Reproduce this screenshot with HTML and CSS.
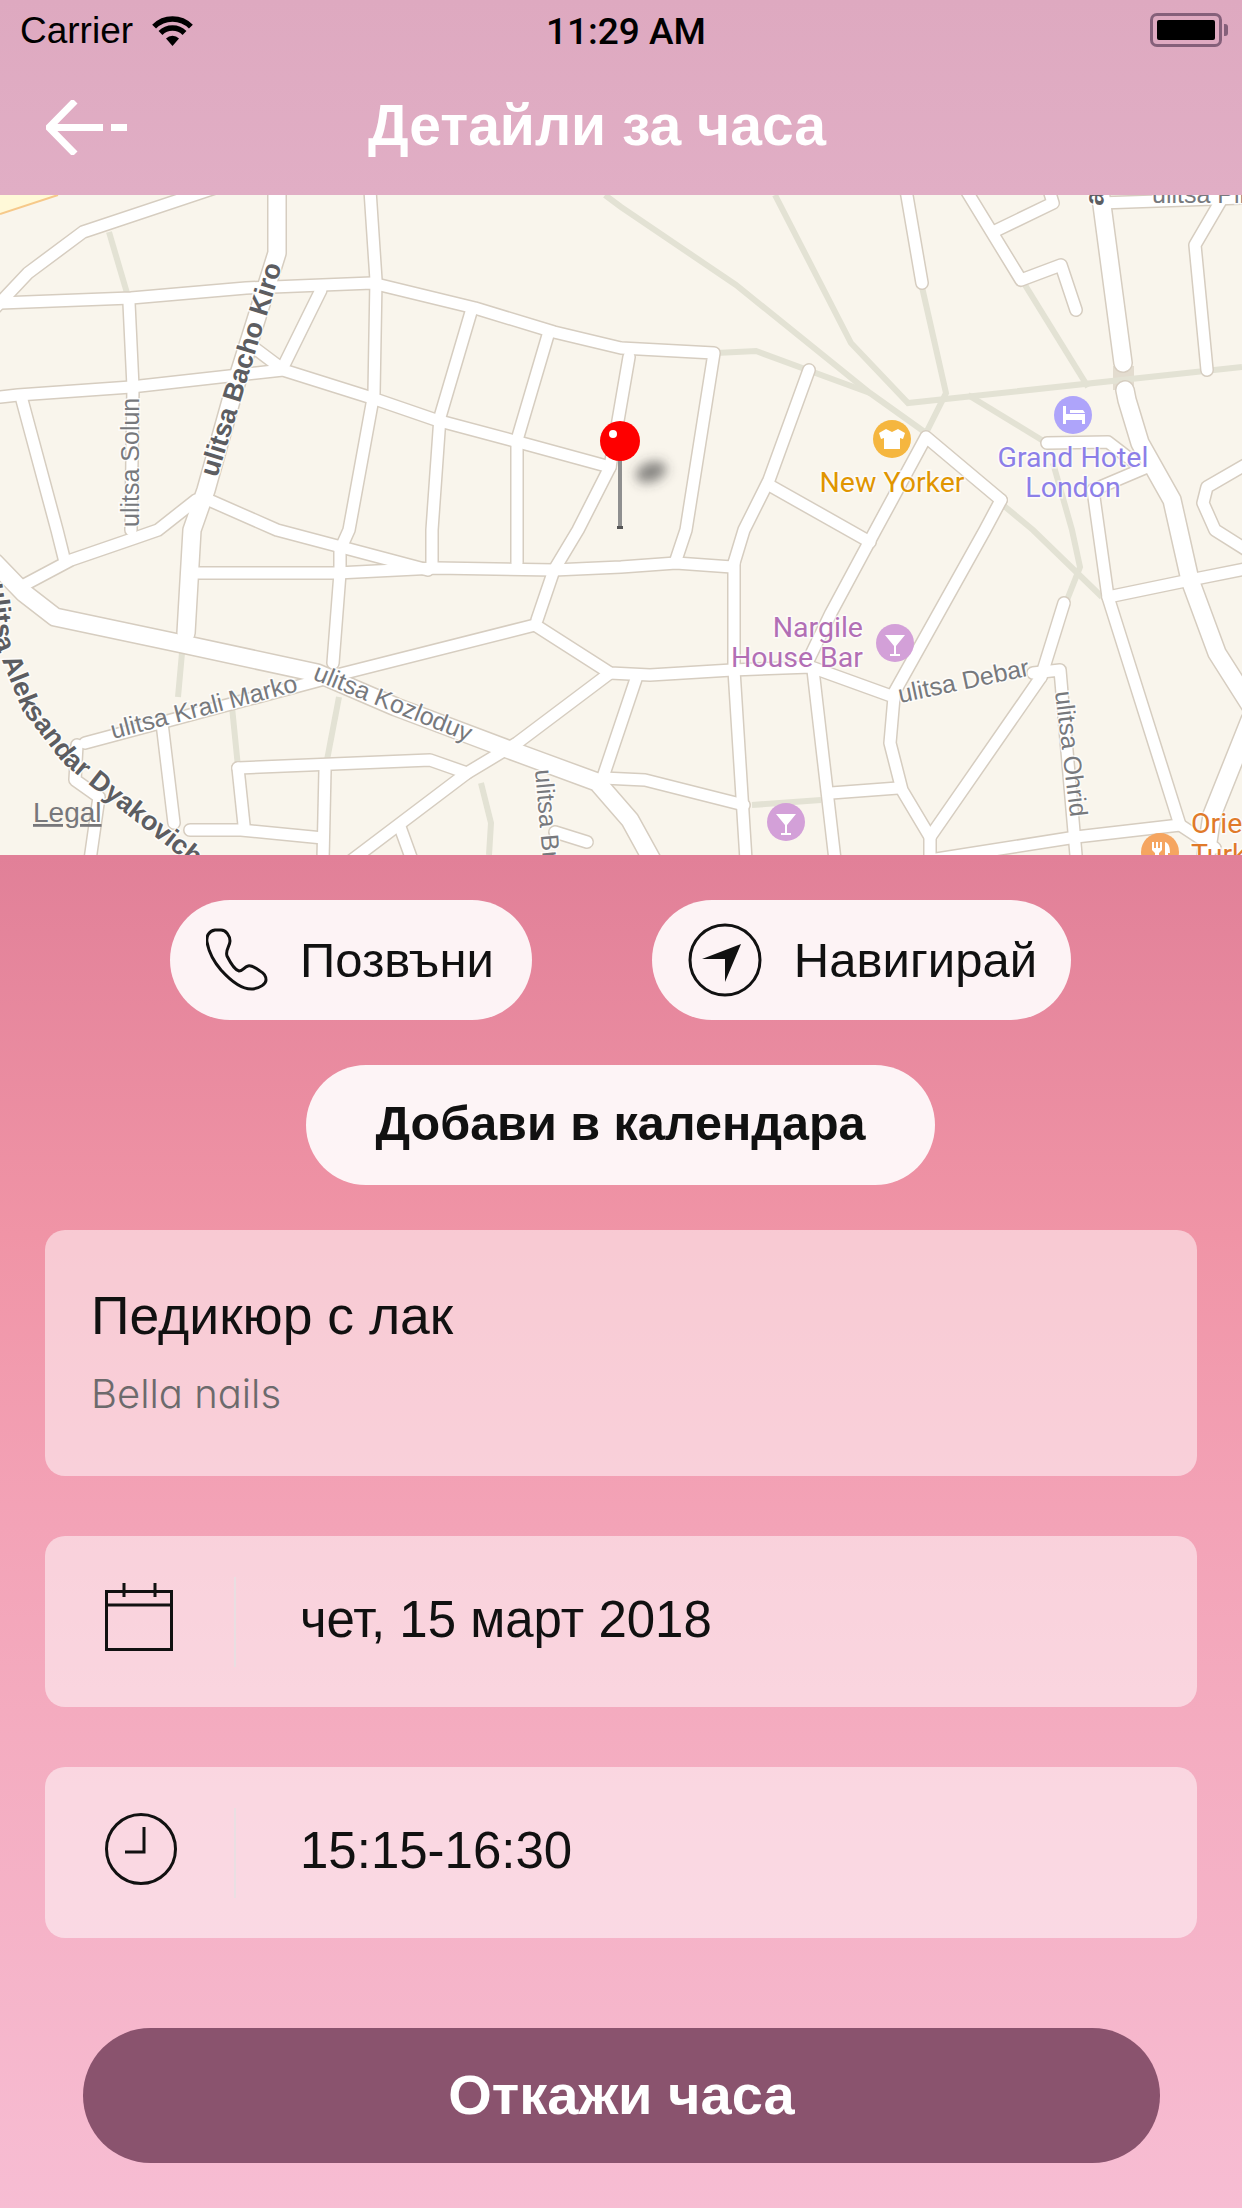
FILE: index.html
```html
<!DOCTYPE html>
<html>
<head>
    <meta charset="utf-8">
    <title>Детайли за часа</title>
    <link rel="stylesheet" href="styles.css">
</head>
<body>
    <header class="top">
        <div class="status">
            <div class="status-left">
                <span>Carrier</span>
                <svg class="wifi" width="43" height="30" viewBox="0 0 43 30">
                    <path class="wifi-arc" d="M3.1 10.6A26 26 0 0 1 39.9 10.6"/>
                    <path class="wifi-arc" d="M9.5 17A17 17 0 0 1 33.5 17"/>
                    <path d="M21.5 30L15 22.5A9.2 9.2 0 0 1 28 22.5Z"/>
                </svg>
            </div>
            <span class="clock">11:29 AM</span>
            <div class="battery"><div class="battery-level"></div></div>
        </div>
        <div class="nav">
            <svg class="back" width="81" height="55" viewBox="0 0 81 55">
                <path d="M29 1L3 27.500L29 54M3 27.500H57M65 27.500H81"/>
            </svg>
            <h1>Детайли за часа</h1>
        </div>
    </header>

    <!-- map is one picture, coordinates below are page coordinates -->
    <svg class="map" width="1242" height="660" viewBox="0 195 1242 660">
        <defs>
            <filter id="pinBlur" x="-80%" y="-80%" width="260%" height="260%">
                <feGaussianBlur stdDeviation="6"/>
            </filter>
            <path id="alekPath" d="M-12 584L-4 645L22 710L63 763L92 787L200 872"/>
            <g id="paths">
                <path d="M605 195L621 207L736 285L870 393L926 433"/>
                <path d="M775 195L851 343L908 403L1242 367"/>
                <path d="M922 287L946 393L926 433"/>
                <path d="M716 353L756 351L870 393"/>
                <path d="M968 395L1045 442"/>
                <path d="M1025 285L1088 387"/>
                <path d="M1053 463L1072 530L1080 567L1067 600"/>
                <path d="M997 500L1033 530L1102 597"/>
                <path d="M109 232L127 293"/>
                <path d="M182 653L178 697"/>
                <path d="M232 707L238 767"/>
                <path d="M339 697L327 760"/>
                <path d="M481 783L491 823L489 855"/>
                <path d="M752 805L821 800"/>
            </g>
            <g id="minor">
                <path d="M-5 308L28 273L83 232L215 188"/>
                <path d="M0 303L131 298L246 288L372 283L475 308L554 332L621 348L714 353L686 530L676 560"/>
                <path d="M370 190L376 280L374 393L349 530L340 550L340 573L333 663"/>
                <path d="M0 397L18 395L131 387L283 370L372 398L436 420L511 440L610 467"/>
                <path d="M629 357L610 467L578 530L554 570L537 620"/>
                <path d="M321 290L285 363"/>
                <path d="M253 347L277 365"/>
                <path d="M129 303L133 387L131 530"/>
                <path d="M196 500L158 530L135 538L71 560L24 585"/>
                <path d="M202 497L277 530L345 548L428 570"/>
                <path d="M198 573L337 573L436 568L554 570L621 567L676 563L732 567"/>
                <path d="M471 312L440 417L432 530L432 563"/>
                <path d="M548 335L517 440L517 563"/>
                <path d="M22 400L57 530L65 562"/>
                <path d="M77 745L75 780L99 797L90 860"/>
                <path d="M162 723L174 823"/>
                <path d="M85 743L321 680"/>
                <path d="M238 768L430 760L467 773"/>
                <path d="M238 768L244 825"/>
                <path d="M325 770L323 860"/>
                <path d="M190 830L241 830L323 838"/>
                <path d="M352 860L467 773L517 743L610 673"/>
                <path d="M535 625L329 677"/>
                <path d="M535 625L610 673L650 675L732 670L811 667L894 697L890 743L902 790L930 837L930 860"/>
                <path d="M400 827L412 860"/>
                <path d="M555 832L587 842"/>
                <path d="M603 777L637 676"/>
                <path d="M734 563L734 670L746 860"/>
                <path d="M813 670L835 860"/>
                <path d="M1001 500L926 437L874 533L831 613L807 663"/>
                <path d="M1001 500L985 530L894 693"/>
                <path d="M809 370L769 480L744 530L734 563"/>
                <path d="M769 485L870 542"/>
                <path d="M1041 677L1064 603"/>
                <path d="M1041 677L930 837"/>
                <path d="M1033 673L1060 670L1076 855"/>
                <path d="M930 860L1076 837L1180 825L1215 848"/>
                <path d="M1093 490L1108 597L1180 825"/>
                <path d="M1108 597L1190 580L1245 569"/>
                <path d="M831 793L898 788"/>
                <path d="M603 778L645 780L744 805"/>
                <path d="M906 190L922 283"/>
                <path d="M966 190L1021 280L1061 265L1076 310"/>
                <path d="M993 232L1053 203L1049 190"/>
                <path d="M1100 203L1245 198"/>
                <path d="M1223 197L1195 245L1207 370"/>
                <path d="M1047 443L1108 442L1134 462"/>
                <path d="M1152 465L1093 490"/>
                <path d="M1245 465L1207 487L1203 503L1215 530L1245 549"/>
            </g>
            <g id="major">
                <path d="M277 190L277 253L234 390L206 490L192 530L186 633"/>
                <path d="M-5 563L24 593L55 617L178 643L317 673L396 707L510 750L597 782L630 820L652 860"/>
                <path d="M1100 190L1123 363"/>
                <path d="M1125 390L1127 400L1140 443L1172 500L1190 580L1217 653L1250 705"/>
                <path d="M1205 862L1212 815L1250 720"/>
            </g>
        </defs>

        <rect class="map-ground" x="0" y="195" width="1242" height="660"/>
        <path class="map-park" d="M0 195H58L0 214Z"/>
        <path class="map-park-edge" d="M0 214L58 195"/>
        <rect class="map-tunnel" x="1113" y="366" width="21" height="24"/>
        <use href="#paths" class="path-line"/>
        <use href="#minor" class="road-case"/>
        <use href="#major" class="road-case-wide"/>
        <use href="#minor" class="road-fill"/>
        <use href="#major" class="road-fill-wide"/>

        <text class="street" transform="translate(139 527) rotate(-90)">ulitsa Solun</text>
        <text class="street street-bold" transform="translate(217 478) rotate(-73)">ulitsa Bacho Kiro</text>
        <text class="street street-bold"><textPath href="#alekPath">ulitsa Aleksandar Dyakovich</textPath></text>
        <text class="street" transform="translate(113 739) rotate(-14.500)">ulitsa Krali Marko</text>
        <text class="street" transform="translate(312 679) rotate(22)">ulitsa Kozloduy</text>
        <text class="street" transform="translate(535 770) rotate(85)">ulitsa Bratstvo</text>
        <text class="street" transform="translate(900 703) rotate(-12)">ulitsa Debar</text>
        <text class="street" transform="translate(1055 692) rotate(83)">ulitsa Ohrid</text>
        <text class="street" x="1152" y="203">ulitsa Pirot</text>
        <text class="street street-bold" transform="translate(1103 206) rotate(-85)">a</text>
        <text class="legal" x="33" y="822">Legal</text>

        <circle class="poi-shop" cx="892" cy="439" r="19"/>
        <path class="poi-glyph" d="M886 429L892 432L898 429L905 433L903 439L900 438V449H884V438L881 439L879 433Z"/>
        <text class="poi-name poi-name-shop" x="892" y="492">New Yorker</text>

        <circle class="poi-hotel" cx="1073" cy="415" r="19"/>
        <path class="poi-glyph" d="M1063 406H1066V414H1085V424H1082V420H1066V424H1063ZM1070 410H1083L1085 413H1070Z"/>
        <text class="poi-name poi-name-hotel" x="1073" y="467">Grand Hotel</text>
        <text class="poi-name poi-name-hotel" x="1073" y="497">London</text>

        <circle class="poi-bar" cx="895" cy="643" r="19"/>
        <path class="poi-glyph" d="M885 635H905L896 646V654H900V656H890V654H894V646Z"/>
        <text class="poi-name poi-name-bar poi-end" x="863" y="637">Nargile</text>
        <text class="poi-name poi-name-bar poi-end" x="863" y="667">House Bar</text>

        <circle class="poi-bar" cx="786" cy="822" r="19"/>
        <path class="poi-glyph" d="M776 814H796L787 825V833H791V835H781V833H785V825Z"/>

        <circle class="poi-food" cx="1160" cy="852" r="19"/>
        <path class="poi-glyph" d="M1152 842H1154V848H1156V842H1158V848H1160V842H1162V850L1159 853V862H1155V853L1152 850ZM1165 842C1169 843 1170 848 1170 853H1168V862H1165Z"/>
        <text class="poi-name poi-name-food" x="1191" y="833">Orient</text>
        <text class="poi-name poi-name-food" x="1191" y="864">Turk</text>

        <ellipse class="pin-shadow" cx="651" cy="472" rx="16" ry="10" transform="rotate(-20 651 472)"/>
        <rect class="pin-needle" x="618" y="460" width="4" height="68"/>
        <rect class="pin-foot" x="617" y="526" width="6" height="3"/>
        <circle class="pin-head" cx="620" cy="441" r="20"/>
        <circle class="pin-shine" cx="613" cy="434" r="4"/>
    </svg>

    <main class="content">
        <div class="actions">
            <a class="pill pill-call">
                <svg class="pill-icon" width="62" height="64" viewBox="0 0 62 64">
                    <path d="M9 2C3 3 0 8 1 14C3 26 9 35 15 42C24 52 36 62 47 61C54 60 60 56 60 52C60 48 58 45 54 43C50 40 45 37 42 38C38 39 37 43 33 43C29 42 24 34 21 28C19 22 24 18 24 13C24 8 20 2 15 2Z"/>
                </svg>
                <span>Позвъни</span>
            </a>
            <a class="pill pill-nav">
                <svg class="pill-icon" width="74" height="74" viewBox="0 0 74 74">
                    <circle cx="37" cy="37" r="35"/>
                    <path class="pill-icon-solid" d="M53 21L14 36H37V59Z"/>
                </svg>
                <span>Навигирай</span>
            </a>
        </div>
        <a class="pill pill-wide">Добави в календара</a>

        <section class="card card-service">
            <div class="service-name">Педикюр с лак</div>
            <div class="service-place">Bella nails</div>
        </section>

        <section class="card card-row">
            <div class="row-icon">
                <svg class="line-icon icon-date" width="68" height="68" viewBox="0 0 68 68">
                    <rect x="1.500" y="8.500" width="65" height="58"/>
                    <path d="M1.500 22H66.500M19 0V14M50 0V14"/>
                </svg>
            </div>
            <div class="row-text">чет, 15 март 2018</div>
        </section>

        <section class="card card-row">
            <div class="row-icon">
                <svg class="line-icon icon-time" width="72" height="72" viewBox="0 0 72 72">
                    <circle cx="36" cy="36" r="34.500"/>
                    <path d="M39 14V39H20"/>
                </svg>
            </div>
            <div class="row-text">15:15-16:30</div>
        </section>

        <button class="cancel">Откажи часа</button>
    </main>
</body>
</html>
```

FILE: styles.css
```css
* {
    box-sizing: border-box;
}
html, body {
    margin: 0;
    padding: 0;
}
body {
    width: 1242px;
    height: 2208px;
    overflow: hidden;
    font-family: "Liberation Sans", Arial, sans-serif;
    color: #111;
    background-color: #f3a2b6;
}

/* header */
.top {
    height: 195px;
    background: linear-gradient(#dea9c0, #e1aec5);
}
.status {
    height: 60px;
    padding: 0 15px 0 20px;
    display: grid;
    grid-template-columns: 1fr auto 1fr;
    align-items: center;
    font-size: 37px;
    color: #000;
}
.status-left {
    display: flex;
    align-items: center;
    gap: 18px;
    padding-top: 2px;
}
.wifi-arc {
    fill: none;
    stroke: #000;
    stroke-width: 5.500;
}
.clock {
    font-family: Roboto, "Liberation Sans", sans-serif;
    font-weight: 500;
    margin-left: 5px;
    padding-top: 2px;
}
.battery {
    justify-self: end;
    position: relative;
    width: 72px;
    height: 34px;
    padding: 4px;
    border: 3px solid #85607a;
    border-radius: 7px;
    margin-right: 5px;
}
.battery::after {
    content: "";
    position: absolute;
    right: -9px;
    top: 8px;
    width: 4px;
    height: 12px;
    border-radius: 0 3px 3px 0;
    background-color: #85607a;
}
.battery-level {
    height: 100%;
    background-color: #000;
    border-radius: 2px;
}
.nav {
    display: flex;
    align-items: center;
    height: 135px;
    padding: 0 0 4px 46px;
    margin-top: -1px;
}
.back {
    flex: none;
    margin-top: 6px;
}
.back path {
    fill: none;
    stroke: #fff;
    stroke-width: 7;
}
h1 {
    margin: 0 0 0 241px;
    font-size: 57px;
    font-weight: 700;
    color: #fff;
    white-space: nowrap;
}

/* map */
.map {
    display: block;
}
.map-ground {
    fill: #f9f5ec;
}
.map-park {
    fill: #fff9d8;
}
.map-park-edge {
    fill: none;
    stroke: #f6c98a;
    stroke-width: 2;
}
.map-tunnel {
    fill: #e3dccf;
}
.path-line {
    fill: none;
    stroke: #e3e2d4;
    stroke-width: 6;
}
.road-case, .road-case-wide, .road-fill, .road-fill-wide {
    fill: none;
    stroke-linecap: round;
    stroke-linejoin: round;
}
.road-case {
    stroke: #d6cdc0;
    stroke-width: 14;
}
.road-case-wide {
    stroke: #d6cdc0;
    stroke-width: 20;
}
.road-fill {
    stroke: #fff;
    stroke-width: 11;
}
.road-fill-wide {
    stroke: #fff;
    stroke-width: 17;
}
.street {
    font-size: 25px;
    fill: #77797d;
    stroke: rgba(255, 255, 255, 0.8);
    stroke-width: 3px;
    paint-order: stroke;
}
.street-bold {
    font-size: 27px;
    font-weight: 700;
    fill: #5c5d61;
}
.legal {
    font-size: 28px;
    fill: #77777a;
    text-decoration: underline;
}
.poi-shop {
    fill: #f5b63f;
}
.poi-hotel {
    fill: #aea4fa;
}
.poi-bar {
    fill: #d3a0d8;
}
.poi-food {
    fill: #f5a560;
}
.poi-glyph {
    fill: #fff;
}
.poi-name {
    font-family: Roboto, "Liberation Sans", sans-serif;
    font-size: 28.500px;
    text-anchor: middle;
    stroke: rgba(255, 255, 255, 0.7);
    stroke-width: 3px;
    paint-order: stroke;
}
.poi-end {
    text-anchor: end;
}
.poi-name-shop {
    fill: #e09500;
}
.poi-name-hotel {
    fill: #8c7fe8;
}
.poi-name-bar {
    fill: #b26fb5;
}
.poi-name-food {
    fill: #e07a2a;
    text-anchor: start;
}
.pin-shadow {
    fill: rgba(60, 60, 60, 0.6);
    filter: url(#pinBlur);
}
.pin-needle {
    fill: #8f8f8f;
}
.pin-foot {
    fill: #555;
}
.pin-head {
    fill: #fe0000;
}
.pin-shine {
    fill: #fff;
}

/* content */
.content {
    height: 1353px;
    padding: 45px 45px 0;
    display: flex;
    flex-direction: column;
    background: linear-gradient(#e18098 0%, #f094a6 28%, #f3a2b6 48%, #f4acc0 65%, #f7bdd3 100%);
}
.actions {
    display: flex;
    justify-content: center;
    gap: 120px;
    margin-left: -1px;
}
.pill {
    display: flex;
    align-items: center;
    height: 120px;
    border-radius: 60px;
    background-color: rgba(255, 255, 255, 0.9);
    font-size: 49px;
    white-space: nowrap;
}
.pill-icon {
    flex: none;
    margin-right: 32px;
}
.pill-icon path, .pill-icon circle {
    fill: none;
    stroke: #111;
    stroke-width: 3;
}
.pill-icon .pill-icon-solid {
    fill: #111;
    stroke: none;
}
.pill-call {
    padding: 0 38px 0 36px;
}
.pill-nav {
    padding: 0 34px 0 36px;
}
.pill-wide {
    align-self: center;
    margin: 45px 0 0 -1px;
    padding: 0 69px 5px;
    font-size: 48.500px;
    font-weight: 700;
}
.card {
    border-radius: 20px;
    background-color: rgba(255, 255, 255, 0.5);
}
.card-service {
    height: 246px;
    margin-top: 45px;
    padding: 56px 46px 0;
}
.service-name {
    font-size: 53.500px;
    line-height: 60px;
}
.service-place {
    margin-top: 25px;
    font-family: Inter, "Liberation Sans", sans-serif;
    font-feature-settings: "cv11";
    font-weight: 300;
    font-size: 40px;
    line-height: 46px;
    color: #6c6a6c;
}
.card-row {
    display: flex;
    align-items: center;
    height: 171px;
    margin-top: 60px;
}
.row-icon {
    width: 191px;
    height: 90px;
    padding-left: 60px;
    display: flex;
    align-items: center;
    border-right: 2px solid rgba(226, 226, 226, 0.7);
}
.icon-date {
    margin-bottom: 10px;
}
.icon-time {
    margin-bottom: 8px;
}
.line-icon path, .line-icon rect, .line-icon circle {
    fill: none;
    stroke: #111;
    stroke-width: 3;
}
.row-text {
    margin-left: 64px;
    padding-bottom: 5px;
    font-size: 51px;
}
.cancel {
    height: 135px;
    margin: 90px 37px 0 38px;
    padding-bottom: 4px;
    border: none;
    border-radius: 68px;
    background-color: #8a536e;
    color: #fff;
    font-family: "Liberation Sans", Arial, sans-serif;
    font-size: 56px;
    font-weight: 700;
}
```
